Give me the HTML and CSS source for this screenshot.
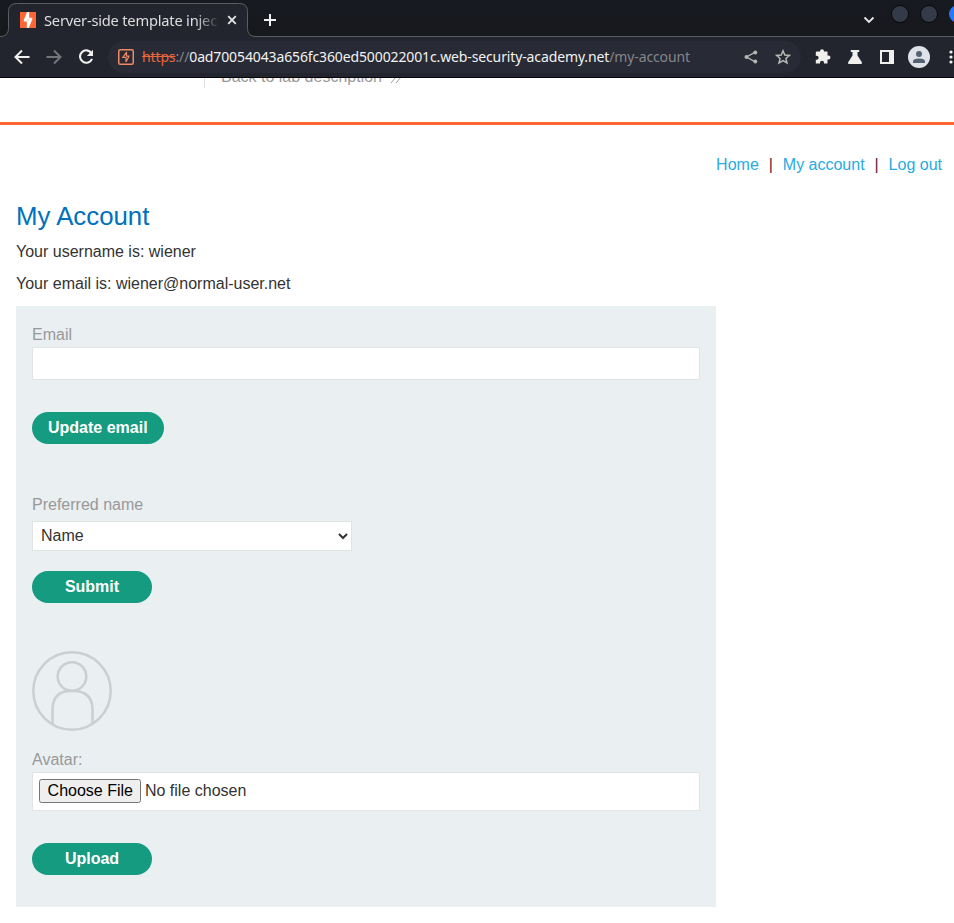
FILE: index.html
```html
<!DOCTYPE html>
<html lang="en">
<head>
<meta charset="utf-8">
<title>My Account</title>
<link rel="stylesheet" href="styles.css">
</head>
<body>
<header class="browser">
  <div class="tabstrip">
    <div class="tab">
      <svg class="tab-shape" width="256" height="37" viewBox="0 0 256 37"><path d="M0 37V36.5Q8.500 36.500 8.500 28.500V11.500Q8.500 3.500 16.500 3.500H239.500Q247.500 3.500 247.500 11.500V28.500Q247.500 36.500 255.500 36.500V37Z" fill="#23252e"/><path d="M0 36.5Q8.500 36.500 8.500 28.500V11.500Q8.500 3.500 16.500 3.500H239.500Q247.500 3.500 247.500 11.500V28.500Q247.500 36.500 256 36.500" fill="none" stroke="#5b5d62"/></svg>
      <svg class="favicon" width="16" height="16" viewBox="0 0 16 16"><path fill="#ff6633" d="M0 0h16v16H0z"/><path fill="#fff" d="M7 0H9.200V5.800H12.300V7.200L8.800 16H6.800V9.500H3.800V8Z"/><path fill="#ff6633" d="M7.600 6.800H9.800L8.800 8.800H6.600Z" opacity=".25"/></svg>
      <span class="tab-title">Server-side template injec</span>
      <svg class="tab-close" width="10" height="10" viewBox="0 0 10 10"><path d="M1.200 1.200L8.800 8.800M8.800 1.200L1.200 8.800" stroke="#e6e6e8" stroke-width="1.800"/></svg>
    </div>
    <svg class="new-tab" width="12" height="12" viewBox="0 0 12 12"><path d="M6 0V12M0 6H12" stroke="#f0f0f0" stroke-width="2"/></svg>
    <div class="window-controls">
      <svg width="12" height="8" viewBox="0 0 12 8"><path d="M1.500 1.500L6 6L10.500 1.500" fill="none" stroke="#e8e8e6" stroke-width="1.800"/></svg>
      <i class="dot"></i><i class="dot"></i><i class="dot dot-blue"></i>
    </div>
  </div>
  <div class="toolbar">
    <svg width="16" height="16" viewBox="0 0 16 16"><path d="M15.500 8H2M8 1.500L1.500 8L8 14.500" fill="none" stroke="#f0f0ee" stroke-width="2"/></svg>
    <svg width="16" height="16" viewBox="0 0 16 16"><path d="M.5 8H14M8 1.500L14.500 8L8 14.500" fill="none" stroke="#75767a" stroke-width="2"/></svg>
    <svg width="16" height="16" viewBox="0 0 16 16"><path d="M13.400 4.100A6.200 6.200 0 1 0 14 9.800" fill="none" stroke="#f0f0ee" stroke-width="2.100"/><path d="M15 .8V7H8.800Z" fill="#f0f0ee"/></svg>
    <div class="address">
      <svg width="16" height="16" viewBox="0 0 16 16"><rect x=".75" y=".75" width="14.500" height="14.500" rx="1.500" fill="none" stroke="#f08a60" stroke-width="1.500"/><path d="M8.800 2.800L4.800 8.300H7.500M8.500 3.500V7.200H11L8 13V8.300" fill="none" stroke="#f08a60" stroke-width="1.200"/></svg>
      <span class="url"><s>https</s><span>://</span><b>0ad70054043a656fc360ed500022001c.web-security-academy.net</b><span>/my-account</span></span>
      <svg class="share" width="14" height="14" viewBox="0 0 14 14"><path d="M11.300 2.200L2.500 7L11.300 11.800" fill="none" stroke="#b5b5b5" stroke-width="1.400"/><g fill="#b5b5b5"><circle cx="11.300" cy="2.500" r="2"/><circle cx="2.500" cy="7" r="2"/><circle cx="11.300" cy="11.500" r="2"/></g></svg>
      <svg width="16" height="16" viewBox="0 0 16 16"><path d="M8 1.800L9.800 6L14.400 6.400L10.900 9.400L12 13.900L8 11.500L4 13.900L5.100 9.400L1.600 6.400L6.200 6Z" fill="none" stroke="#b8b8b6" stroke-width="1.500"/></svg>
    </div>
    <div class="actions">
      <svg width="16" height="16" viewBox="0 0 16 16"><path fill="#efefed" d="M1.500 2.500H5V2.200a2 2 0 0 1 4 0V2.500H12.500V6.500H13.500a2 2 0 0 1 0 4H12.500V14.500H9V13.800a2 2 0 0 0-4 0V14.500H.8V10.800H1.600a2 2 0 0 0 0-4H.8V3.200Z"/></svg>
      <svg width="16" height="16" viewBox="0 0 16 16"><path fill="#efefed" d="M3.800 1H12.200V3H10.500V6.500L15 13.500Q15 15 14 15H2Q1 15 1 13.500L5.500 6.500V3H3.800Z"/></svg>
      <svg width="16" height="16" viewBox="0 0 16 16"><path fill="#efefed" fill-rule="evenodd" d="M1 1H15V15H1ZM3 3V13H10V3Z"/></svg>
      <svg width="22" height="22" viewBox="0 0 22 22"><circle cx="11" cy="11" r="11" fill="#dfe2e8"/><circle cx="11" cy="8" r="3" fill="#566274"/><path d="M5 17V15.500Q5 12.500 11 12.500T17 15.500V17Z" fill="#566274"/></svg>
      <svg width="4" height="14" viewBox="0 0 4 14"><g fill="#f0f0ee"><circle cx="2" cy="2" r="1.600"/><circle cx="2" cy="7" r="1.600"/><circle cx="2" cy="12" r="1.600"/></g></svg>
    </div>
  </div>
</header>
<div class="lab-banner">
  <div class="lab-link">Back to lab description
    <svg width="12" height="12" viewBox="0 0 12 12"><path d="M1 0L6 6L1 12M6 0L11 6L6 12" fill="none" stroke="#999" stroke-width="1"/></svg>
  </div>
</div>
<main>
  <nav><a>Home</a><i>|</i><a>My account</a><i>|</i><a>Log out</a></nav>
  <h1>My Account</h1>
  <p>Your username is: wiener</p>
  <p>Your email is: wiener@normal-user.net</p>
  <div class="panel">
    <form class="email-form">
      <label for="email">Email</label>
      <input id="email" class="field" type="text">
      <button type="button">Update email</button>
    </form>
    <form class="name-form">
      <label for="name">Preferred name</label>
      <select id="name"><option>Name</option></select>
      <button type="button">Submit</button>
    </form>
    <form class="avatar-form">
      <svg class="avatar" width="80" height="80" viewBox="0 0 80 80"><g fill="none" stroke="#cacfcf" stroke-width="2.500"><circle cx="40" cy="40" r="38.700"/><circle cx="40" cy="25.500" r="14.300"/><path d="M20.500 73V59Q20.500 40 39 40H41Q60.500 40 60.500 59V73"/></g></svg>
      <label for="file">Avatar:</label>
      <input id="file" class="field file" type="file">
      <button type="button">Upload</button>
    </form>
  </div>
</main>
</body>
</html>
```
FILE: styles.css
```css
* { box-sizing: border-box; }
body { margin: 0; width: 954px; height: 923px; overflow: hidden; background: #fff; color: #333332; font: 16px/18px "Liberation Sans", Arial, sans-serif; }
svg { display: block; flex: none; }
.browser { height: 78px; background: #23252e; border-bottom: 1px solid #050507; font-family: "Noto Sans", sans-serif; overflow: hidden; }
.tabstrip { height: 37px; display: flex; align-items: center; background: linear-gradient(#181a22, #17181c); border-bottom: 1px solid #5b5d62; }
.tab { position: relative; align-self: flex-start; width: 256px; height: 37px; padding: 2px 0 0 20px; display: flex; align-items: center; }
.tab-shape { position: absolute; left: 0; top: 0; }
.favicon, .tab-title, .tab-close { position: relative; }
.tab-title { width: 176px; margin-left: 8px; overflow: hidden; white-space: nowrap; font-size: 14.7px; letter-spacing: -.22px; line-height: 22px; color: #dededf; -webkit-mask-image: linear-gradient(90deg, #000 86%, transparent); mask-image: linear-gradient(90deg, #000 86%, transparent); }
.tab-close { margin-left: 7px; }
.new-tab { margin: 4px 0 0 8px; }
.window-controls { margin-left: auto; display: flex; align-items: center; height: 36px; width: 91px; }
.window-controls svg { margin: 4px 16px 0 0; }
.dot { flex: none; width: 18px; height: 18px; margin: -8px 11px 0 0; border-radius: 50%; background: #343a47; border: 1px solid #08090c; }
.dot-blue { background: #2777ff; border-color: #2777ff; }
.toolbar { height: 40px; padding-left: 14px; display: flex; align-items: center; gap: 16px; }
.address { width: 693px; height: 32px; margin-left: -2px; padding: 0 10px 0 10px; border-radius: 16px; background: #282a35; display: flex; align-items: center; }
.url { width: 549px; margin-left: 8px; font-size: 14px; letter-spacing: -.125px; line-height: 20px; white-space: nowrap; color: #85868b; }
.url b { font-weight: 400; color: #f2f2f2; }
.url s { color: #e8673f; }
.share { margin: 0 17px 0 53px; }
.actions { display: flex; align-items: center; gap: 16px; margin-left: -2px; }
.actions svg:nth-child(4) { margin-left: -3px; }
.actions svg:nth-child(5) { margin-left: 3px; }
.lab-banner { height: 47px; border-bottom: 3px solid #ff6633; overflow: hidden; }
.lab-link { margin: -10px 0 0 204px; height: 20px; padding-left: 16px; border-left: 1px solid #ddd; display: flex; gap: 8px; color: #999; line-height: 18px; }
.lab-link svg { margin-top: 3px; }
main { padding: 31px 12px 0 16px; }
nav { display: flex; justify-content: flex-end; gap: 10px; color: #29abe2; }
nav i { width: 4px; text-align: center; font-style: normal; color: #5c2436; }
h1 { margin: 27px 0 0; font-size: 25.8px; font-weight: 400; line-height: 30px; color: #0071bc; }
p { margin: 12px 0 0; line-height: 18px; }
p + p { margin-top: 14px; }
.panel { width: 700px; height: 601px; margin-top: 13px; padding: 20px 16px; background: #eaeff2; }
form { margin: 0; }
label { display: block; height: 18px; color: #999; }
.field { display: block; width: 668px; height: 33px; margin-top: 3px; border: 1px solid #e2e4e4; background: #fff; font: inherit; color: #333332; outline: 0; }
button { display: block; min-width: 120px; height: 32px; padding: 0 16px; border: 0; border-radius: 16px; background: #159b80; color: #fff; font: bold 16px/18px "Liberation Sans", Arial, sans-serif; }
.email-form button { margin-top: 32px; }
.name-form { margin-top: 52px; }
select { display: block; width: 320px; height: 30px; margin: 7px 0 20px; padding: 0 4px 1px; border: 1px solid #e2e4e4; border-radius: 0; background: #fff; font: inherit; color: #333332; }
.avatar-form { margin-top: 48px; }
.avatar { margin-bottom: 20px; }
.file { height: 39px; padding: 6px; }
.file::file-selector-button { padding: 1px 6px 1px 6.600px; }
.avatar-form button { margin-top: 32px; }
```
